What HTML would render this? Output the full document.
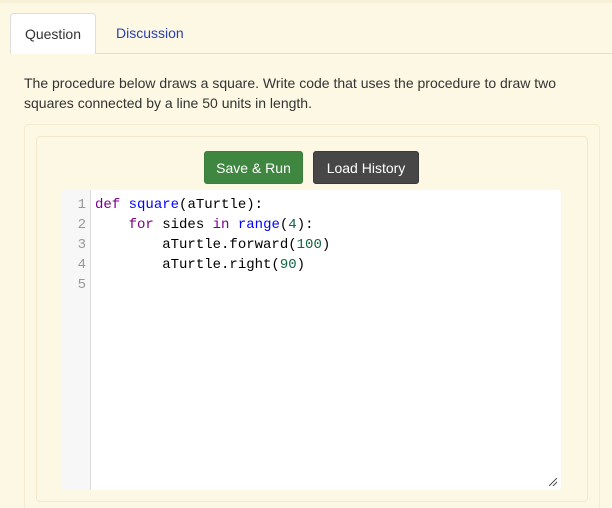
<!DOCTYPE html>
<html style="overflow:hidden;width:612px;height:508px"><head><style>
body{margin:0;width:612px;height:508px;background:#fcf8e3;font-family:"Liberation Sans",sans-serif;position:relative;overflow:hidden}
.top{position:absolute;left:0;top:0;width:612px;height:3px;background:#f7f1d8}
.tabline{position:absolute;left:10px;right:0;top:53px;height:1px;background:#ddd}
.tab{position:absolute;top:13px;height:40px;line-height:40px;font-size:14px}
.t1{left:10px;width:86px;background:#fff;border:1px solid #ddd;border-bottom:none;border-radius:4px 4px 0 0;color:#333;text-align:center;box-sizing:border-box;height:41px}
.t2{left:116px;color:#2a3fae}
p{position:absolute;left:24px;top:73px;margin:0;font-size:14px;line-height:20px;color:#333;width:580px}
.outer{position:absolute;left:24px;top:124px;width:576px;height:384px;box-sizing:border-box;border:1px solid #f5ecd0;border-bottom:none;border-radius:4px 4px 0 0}
.inner{position:absolute;left:36px;top:136px;width:550px;height:364px;border:1px solid #f3e8cc;border-radius:4px}
.btn{position:absolute;top:151px;height:33px;line-height:33px;color:#fff;font-size:14px;text-align:center;border-radius:3px;box-sizing:border-box}
.b1{left:204px;width:99px;background:#3f8640;border:1px solid #3a7d3c}
.b2{left:313px;width:106px;background:#474747;border:1px solid #3a3a3a}
.ed{position:absolute;left:61px;top:190px;width:500px;height:300px;background:#fff;border-radius:3px;overflow:hidden}
.gut{position:absolute;left:0;top:0;width:29px;height:300px;background:#f7f7f7;border-right:1px solid #ddd}
.ln{position:absolute;left:0;width:25px;text-align:right;color:#999;font:14px "Liberation Mono",monospace;line-height:20px}
.code{position:absolute;left:34px;top:5px;font:14px "Liberation Mono",monospace;line-height:20px;color:#000;white-space:pre}
.k{color:#708}.d{color:#00f}.n{color:#164}
.rs{position:absolute;right:4px;bottom:4px;width:8px;height:8px;background:linear-gradient(135deg,transparent 45%,#555 45%,#555 55%,transparent 55%,transparent 70%,#555 70%,#555 80%,transparent 80%)}
</style></head><body>
<div class="top"></div>
<div class="tabline"></div>
<div class="tab t1">Question</div>
<div class="tab t2">Discussion</div>
<p>The procedure below draws a square. Write code that uses the procedure to draw two squares connected by a line 50 units in length.</p>
<div class="outer"></div>
<div class="inner"></div>
<div class="btn b1">Save &amp; Run</div>
<div class="btn b2">Load History</div>
<div class="ed">
<div class="gut"><div class="ln" style="top:5px">1<br>2<br>3<br>4<br>5</div></div>
<div class="code"><span class="k">def</span> <span class="d">square</span>(aTurtle):
    <span class="k">for</span> sides <span class="k">in</span> <span class="d">range</span>(<span class="n">4</span>):
        aTurtle.forward(<span class="n">100</span>)
        aTurtle.right(<span class="n">90</span>)
</div>
<div class="rs"></div>
</div>
</body></html>
